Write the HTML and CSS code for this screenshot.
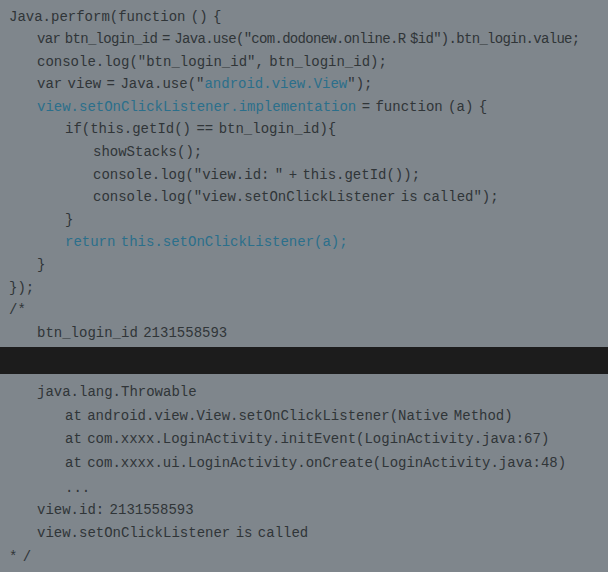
FILE: index.html
```html
<!DOCTYPE html>
<html>
<head>
<meta charset="utf-8">
<link rel="stylesheet" href="styles.css">
</head>
<body>
<div class="page">
  <div class="code top">
    <div class="ln">Java.perform(function () {</div>
    <div class="ln i1 squeeze">var btn_login_id = Java.use("com.dodonew.online.R $id").btn_login.value;</div>
    <div class="ln i1">console.log("btn_login_id", btn_login_id);</div>
    <div class="ln i1">var view = Java.use("<span class="kw">android.view.View</span>");</div>
    <div class="ln i1"><span class="kw">view.setOnClickListener.implementation</span> = function (a) {</div>
    <div class="ln i2">if(this.getId() == btn_login_id){</div>
    <div class="ln i3">showStacks();</div>
    <div class="ln i3">console.log("view.id: " + this.getId());</div>
    <div class="ln i3">console.log("view.setOnClickListener is called");</div>
    <div class="ln i2">}</div>
    <div class="ln i2 kw">return this.setOnClickListener(a);</div>
    <div class="ln i1">}</div>
    <div class="ln">});</div>
    <div class="ln">/*</div>
    <div class="ln i1">btn_login_id 2131558593</div>
  </div>
  <div class="band"></div>
  <div class="code bottom">
    <div class="ln i1">java.lang.Throwable</div>
    <div class="ln i2">at android.view.View.setOnClickListener(Native Method)</div>
    <div class="ln i2">at com.xxxx.LoginActivity.initEvent(LoginActivity.java:67)</div>
    <div class="ln i2">at com.xxxx.ui.LoginActivity.onCreate(LoginActivity.java:48)</div>
    <div class="ln i2 dots">...</div>
    <div class="ln i1">view.id: 2131558593</div>
    <div class="ln i1">view.setOnClickListener is called</div>
    <div class="ln">* /</div>
  </div>
</div>
</body>
</html>
```

FILE: styles.css
```css
html, body {
  margin: 0;
  padding: 0;
  background: #7f868c;
}
.page {
  width: 608px;
  height: 572px;
  overflow: hidden;
  background: #7f868c;
}
.code {
  font-family: "Liberation Mono", monospace;
  font-size: 14px;
  color: #303538;
  word-spacing: -3px;
  padding-left: 9px;
}
.ln {
  white-space: pre;
}
.top {
  height: 347px;
  box-sizing: border-box;
  padding-top: 5.5px;
}
.top .ln {
  height: 22.6px;
  line-height: 22.6px;
}
.band {
  height: 27px;
  background: #1c1c1c;
}
.bottom {
  padding-top: 7px;
}
.bottom .ln {
  height: 23.5px;
  line-height: 23.5px;
}
.dots {
  position: relative;
  top: 2px;
}
.i1 { padding-left: 28px; }
.i2 { padding-left: 56px; }
.i3 { padding-left: 84px; }
.kw { color: #2b6f8b; }
.squeeze { letter-spacing: -0.7px; }
```
